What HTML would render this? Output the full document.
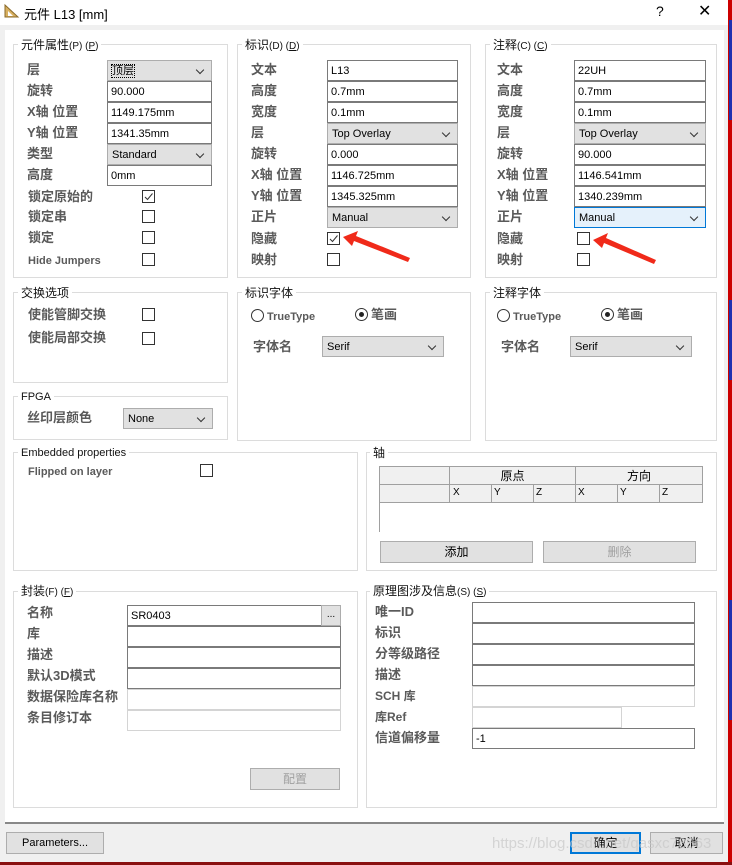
<!DOCTYPE html>
<html><head><meta charset="utf-8"><style>
*{box-sizing:border-box;margin:0;padding:0}
body{width:732px;height:865px;position:relative;background:#f0f0f0;overflow:hidden;font-family:"Liberation Sans","Noto Sans CJK SC",sans-serif;font-size:12px;color:#000}
.a{position:absolute}
.g{position:absolute;border:1px solid #dcdcdc}
.gt{position:absolute;background:#fff;padding:0 3px;font-size:12px;color:#111;line-height:14px;white-space:nowrap}
.l{position:absolute;font-size:13px;color:#5a5a5a;font-weight:bold;line-height:16px;white-space:nowrap}
.i{position:absolute;height:21px;border:1px solid #7a7a7a;background:#fff;font-size:11px;line-height:20px;padding-left:3px;white-space:nowrap;overflow:hidden}
.il{border-color:#d4d4d4}
.c{position:absolute;height:21px;border:1px solid #adadad;background:#e1e1e1;font-size:11px;line-height:20px;padding-left:4px}
.c:after{content:"";position:absolute;right:8px;top:6px;width:5px;height:5px;border-right:1px solid #333;border-bottom:1px solid #333;transform:rotate(45deg)}
.k{position:absolute;width:13px;height:13px;border:1px solid #333;background:#fff}
.b{position:absolute;height:22px;border:1px solid #adadad;background:#e1e1e1;text-align:center;line-height:20px;font-size:12px}
.r{position:absolute;width:13px;height:13px;border:1px solid #333;border-radius:50%;background:#fff}
</style></head><body>
<div class="a" style="left:0;top:0;width:728px;height:25px;background:#fff"></div>
<svg class="a" style="left:4px;top:3px" width="16" height="16"><polygon points="1,2 14,14 1,14" fill="#d8b060" stroke="#8a6a2a"/><polygon points="4,8 9,13 4,13" fill="#fff"/></svg>
<div class="a" style="left:24px;top:4px;font-size:13px">元件 L13 [mm]</div>
<div class="a" style="left:656px;top:3px;font-size:14px">?</div>
<div class="a" style="left:698px;top:1px;font-size:16px">✕</div>
<div class="a" style="left:728px;top:0;width:4px;height:865px;background:#c00"></div>
<div class="a" style="left:729px;top:20px;width:3px;height:100px;background:#2030b0"></div>
<div class="a" style="left:729px;top:300px;width:3px;height:80px;background:#2030b0"></div>
<div class="a" style="left:729px;top:600px;width:3px;height:120px;background:#2030b0"></div>
<div class="a" style="left:0;top:862px;width:732px;height:3px;background:#8a1010"></div>
<div class="a" style="left:5px;top:30px;width:719px;height:794px;background:#fff;border-bottom:2px solid #888"></div>

<div class="g" style="left:13px;top:44px;width:215px;height:234px"></div>
<div class="gt" style="left:18px;top:38px">元件属性<span style="font-size:10px">(P) (<u>P</u>)</span></div>
<div class="l" style="left:27px;top:62px">层</div><div class="c" style="left:107px;top:60px;width:105px"><span style="outline:1px dotted #000">顶层</span></div>
<div class="l" style="left:27px;top:83px">旋转</div><div class="i" style="left:107px;top:81px;width:105px">90.000</div>
<div class="l" style="left:27px;top:104px">X轴 位置</div><div class="i" style="left:107px;top:102px;width:105px">1149.175mm</div>
<div class="l" style="left:27px;top:125px">Y轴 位置</div><div class="i" style="left:107px;top:123px;width:105px">1341.35mm</div>
<div class="l" style="left:27px;top:146px">类型</div><div class="c" style="left:107px;top:144px;width:105px">Standard</div>
<div class="l" style="left:27px;top:167px">高度</div><div class="i" style="left:107px;top:165px;width:105px">0mm</div>
<div class="l" style="left:28px;top:189px">锁定原始的</div><div class="k" style="left:142px;top:190px"><svg width="11" height="11" class="a"><path d="M2 6 L4.5 8.5 L9.5 2.5" stroke="#333" fill="none"/></svg></div>
<div class="l" style="left:28px;top:209px">锁定串</div><div class="k" style="left:142px;top:210px"></div>
<div class="l" style="left:28px;top:230px">锁定</div><div class="k" style="left:142px;top:231px"></div>
<div class="l" style="left:28px;top:253px;font-size:11px">Hide Jumpers</div><div class="k" style="left:142px;top:253px"></div>

<div class="g" style="left:237px;top:44px;width:234px;height:234px"></div>
<div class="gt" style="left:242px;top:38px">标识<span style="font-size:10px">(D) (<u>D</u>)</span></div>
<div class="l" style="left:251px;top:62px">文本</div><div class="i" style="left:327px;top:60px;width:131px">L13</div>
<div class="l" style="left:251px;top:83px">高度</div><div class="i" style="left:327px;top:81px;width:131px">0.7mm</div>
<div class="l" style="left:251px;top:104px">宽度</div><div class="i" style="left:327px;top:102px;width:131px">0.1mm</div>
<div class="l" style="left:251px;top:125px">层</div><div class="c" style="left:327px;top:123px;width:131px">Top Overlay</div>
<div class="l" style="left:251px;top:146px">旋转</div><div class="i" style="left:327px;top:144px;width:131px">0.000</div>
<div class="l" style="left:251px;top:167px">X轴 位置</div><div class="i" style="left:327px;top:165px;width:131px">1146.725mm</div>
<div class="l" style="left:251px;top:188px">Y轴 位置</div><div class="i" style="left:327px;top:186px;width:131px">1345.325mm</div>
<div class="l" style="left:251px;top:209px">正片</div><div class="c" style="left:327px;top:207px;width:131px">Manual</div>
<div class="l" style="left:251px;top:231px">隐藏</div><div class="k" style="left:327px;top:232px"><svg width="11" height="11" class="a"><path d="M2 6 L4.5 8.5 L9.5 2.5" stroke="#333" fill="none"/></svg></div>
<div class="l" style="left:251px;top:252px">映射</div><div class="k" style="left:327px;top:253px"></div>

<div class="g" style="left:485px;top:44px;width:232px;height:234px"></div>
<div class="gt" style="left:490px;top:38px">注释<span style="font-size:10px">(C) (<u>C</u>)</span></div>
<div class="l" style="left:497px;top:62px">文本</div><div class="i" style="left:574px;top:60px;width:132px">22UH</div>
<div class="l" style="left:497px;top:83px">高度</div><div class="i" style="left:574px;top:81px;width:132px">0.7mm</div>
<div class="l" style="left:497px;top:104px">宽度</div><div class="i" style="left:574px;top:102px;width:132px">0.1mm</div>
<div class="l" style="left:497px;top:125px">层</div><div class="c" style="left:574px;top:123px;width:132px">Top Overlay</div>
<div class="l" style="left:497px;top:146px">旋转</div><div class="i" style="left:574px;top:144px;width:132px">90.000</div>
<div class="l" style="left:497px;top:167px">X轴 位置</div><div class="i" style="left:574px;top:165px;width:132px">1146.541mm</div>
<div class="l" style="left:497px;top:188px">Y轴 位置</div><div class="i" style="left:574px;top:186px;width:132px">1340.239mm</div>
<div class="l" style="left:497px;top:209px">正片</div><div class="c" style="left:574px;top:207px;width:132px;background:#e5f1fb;border-color:#0078d7">Manual</div>
<div class="l" style="left:497px;top:231px">隐藏</div><div class="k" style="left:577px;top:232px"></div>
<div class="l" style="left:497px;top:252px">映射</div><div class="k" style="left:577px;top:253px"></div>

<svg class="a" style="left:0;top:0" width="732" height="300">
<polygon points="343,237 358,231 356,236 410,258 408,262 354,241 352,246" fill="#f02a1a"/>
<polygon points="593,240 608,233 606,238 656,260 654,264 604,243 602,248" fill="#f02a1a"/>
</svg>

<div class="g" style="left:13px;top:292px;width:215px;height:91px"></div>
<div class="gt" style="left:18px;top:286px">交换选项</div>
<div class="l" style="left:28px;top:307px">使能管脚交换</div><div class="k" style="left:142px;top:308px"></div>
<div class="l" style="left:28px;top:330px">使能局部交换</div><div class="k" style="left:142px;top:332px"></div>

<div class="g" style="left:13px;top:396px;width:215px;height:44px"></div>
<div class="gt" style="left:18px;top:390px;font-size:11px">FPGA</div>
<div class="l" style="left:27px;top:410px">丝印层颜色</div><div class="c" style="left:123px;top:408px;width:90px">None</div>

<div class="g" style="left:237px;top:292px;width:234px;height:149px"></div>
<div class="gt" style="left:242px;top:286px">标识字体</div>
<div class="r" style="left:251px;top:309px"></div><div class="l" style="left:267px;top:309px;font-size:11px">TrueType</div>
<div class="r" style="left:355px;top:308px"><div class="a" style="left:3px;top:3px;width:5px;height:5px;border-radius:50%;background:#222"></div></div><div class="l" style="left:371px;top:307px">笔画</div>
<div class="l" style="left:253px;top:339px">字体名</div><div class="c" style="left:322px;top:336px;width:122px">Serif</div>

<div class="g" style="left:485px;top:292px;width:232px;height:149px"></div>
<div class="gt" style="left:490px;top:286px">注释字体</div>
<div class="r" style="left:497px;top:309px"></div><div class="l" style="left:513px;top:309px;font-size:11px">TrueType</div>
<div class="r" style="left:601px;top:308px"><div class="a" style="left:3px;top:3px;width:5px;height:5px;border-radius:50%;background:#222"></div></div><div class="l" style="left:617px;top:307px">笔画</div>
<div class="l" style="left:501px;top:339px">字体名</div><div class="c" style="left:570px;top:336px;width:122px">Serif</div>

<div class="g" style="left:13px;top:452px;width:345px;height:119px"></div>
<div class="gt" style="left:18px;top:446px;font-size:11px">Embedded properties</div>
<div class="l" style="left:28px;top:464px;font-size:11px">Flipped on layer</div><div class="k" style="left:200px;top:464px"></div>

<div class="g" style="left:366px;top:452px;width:351px;height:119px"></div>
<div class="gt" style="left:370px;top:446px">轴</div>
<div class="a" style="left:379px;top:466px;width:324px;height:37px;border:1px solid #a0a0a0;background:#f0f0f0"></div>
<div class="a" style="left:379px;top:484px;width:324px;height:1px;background:#a0a0a0"></div>
<div class="a" style="left:449px;top:466px;width:1px;height:37px;background:#a0a0a0"></div>
<div class="a" style="left:575px;top:466px;width:1px;height:37px;background:#a0a0a0"></div>
<div class="a" style="left:491px;top:485px;width:1px;height:17px;background:#a0a0a0"></div>
<div class="a" style="left:533px;top:485px;width:1px;height:17px;background:#a0a0a0"></div>
<div class="a" style="left:617px;top:485px;width:1px;height:17px;background:#a0a0a0"></div>
<div class="a" style="left:659px;top:485px;width:1px;height:17px;background:#a0a0a0"></div>
<div class="a" style="left:379px;top:503px;width:1px;height:29px;background:#a0a0a0"></div>
<div class="a" style="left:450px;top:467px;width:125px;text-align:center;font-size:12px">原点</div>
<div class="a" style="left:576px;top:467px;width:126px;text-align:center;font-size:12px">方向</div>
<div class="a" style="left:453px;top:487px;font-size:10px">X</div><div class="a" style="left:494px;top:487px;font-size:10px">Y</div><div class="a" style="left:536px;top:487px;font-size:10px">Z</div>
<div class="a" style="left:578px;top:487px;font-size:10px">X</div><div class="a" style="left:620px;top:487px;font-size:10px">Y</div><div class="a" style="left:662px;top:487px;font-size:10px">Z</div>
<div class="b" style="left:380px;top:541px;width:153px">添加</div>
<div class="b" style="left:543px;top:541px;width:153px;color:#a0a0a0">删除</div>

<div class="g" style="left:13px;top:591px;width:345px;height:217px"></div>
<div class="gt" style="left:18px;top:584px">封装<span style="font-size:10px">(F) (<u>F</u>)</span></div>
<div class="l" style="left:27px;top:605px">名称</div><div class="i" style="left:127px;top:605px;width:214px">SR0403</div>
<div class="a" style="left:321px;top:605px;width:20px;height:21px;border:1px solid #adadad;background:#e1e1e1;text-align:center;font-size:10px;line-height:18px">...</div>
<div class="l" style="left:27px;top:626px">库</div><div class="i" style="left:127px;top:626px;width:214px"></div>
<div class="l" style="left:27px;top:647px">描述</div><div class="i" style="left:127px;top:647px;width:214px"></div>
<div class="l" style="left:27px;top:668px">默认3D模式</div><div class="i" style="left:127px;top:668px;width:214px"></div>
<div class="l" style="left:27px;top:689px">数据保险库名称</div><div class="i il" style="left:127px;top:689px;width:214px"></div>
<div class="l" style="left:27px;top:710px">条目修订本</div><div class="i il" style="left:127px;top:710px;width:214px"></div>
<div class="b" style="left:250px;top:768px;width:90px;color:#a0a0a0">配置</div>

<div class="g" style="left:366px;top:591px;width:351px;height:217px"></div>
<div class="gt" style="left:370px;top:584px">原理图涉及信息<span style="font-size:10px">(S) (<u>S</u>)</span></div>
<div class="l" style="left:375px;top:604px">唯一ID</div><div class="i" style="left:472px;top:602px;width:223px"></div>
<div class="l" style="left:375px;top:625px">标识</div><div class="i" style="left:472px;top:623px;width:223px"></div>
<div class="l" style="left:375px;top:646px">分等级路径</div><div class="i" style="left:472px;top:644px;width:223px"></div>
<div class="l" style="left:375px;top:667px">描述</div><div class="i" style="left:472px;top:665px;width:223px"></div>
<div class="l" style="left:375px;top:688px;font-size:12px">SCH 库</div><div class="i il" style="left:472px;top:686px;width:223px"></div>
<div class="l" style="left:375px;top:709px;font-size:12px">库Ref</div><div class="i il" style="left:472px;top:707px;width:150px"></div>
<div class="l" style="left:375px;top:730px">信道偏移量</div><div class="i" style="left:472px;top:728px;width:223px">-1</div>

<div class="b" style="left:6px;top:832px;width:98px;font-size:11px">Parameters...</div>
<div class="b" style="left:570px;top:832px;width:71px;border:2px solid #0078d7;line-height:18px">确定</div>
<div class="b" style="left:650px;top:832px;width:73px">取消</div>
<div class="a" style="left:492px;top:835px;font-size:15px;color:rgba(200,200,200,.7);white-space:nowrap">https://blog.csdn.net/qasxc78563</div>
</body></html>
